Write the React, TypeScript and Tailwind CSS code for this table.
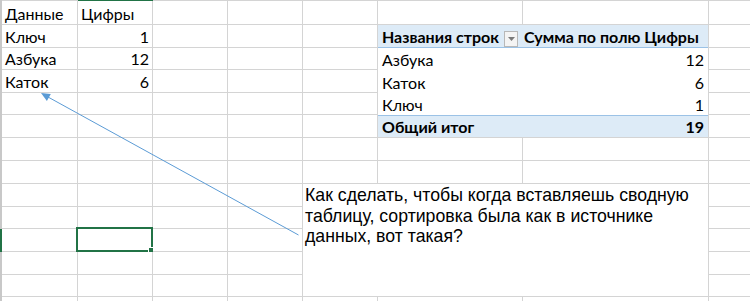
import React from "react";

// Worksheet geometry: narrow header strip, columns A..H, rows 1..14
const COLS = ["A", "B", "C", "D", "E", "F", "G", "H"];
const ROWS = Array.from({ length: 14 }, (_, i) => i + 1);

type CellValue = { text: string; num?: boolean };

const values: Record<string, CellValue> = {
  A1: { text: "Данные" },
  B1: { text: "Цифры" },
  A2: { text: "Ключ" },
  B2: { text: "1", num: true },
  A3: { text: "Азбука" },
  B3: { text: "12", num: true },
  A4: { text: "Каток" },
  B4: { text: "6", num: true },
};

const pivotRows = [
  { label: "Азбука", value: 12, h: "h-[22px]" },
  { label: "Каток", value: 6, h: "h-[23px]" },
  { label: "Ключ", value: 1, h: "h-[22px]" },
];

const cellFont = { fontFamily: "Lato, 'Noto Sans', sans-serif" };

function PivotTable() {
  return (
    <div
      className="col-span-2 row-span-5 flex flex-col border-r border-b border-[#d4d4d4] bg-white text-[16px] leading-[18px] text-black"
      style={cellFont}
    >
      <div className="flex h-[23px] border-b border-[#9bc2e6] bg-[#ddebf7] font-bold">
        <div className="flex w-[145px] items-end justify-between pl-[4px] pr-[5px]">
          <span className="pb-[1px]">Названия строк</span>
          <span className="flex h-[16px] w-[14px] items-center justify-center border border-[#b8b8b8] bg-[#f4f4f4]">
            <svg width="7" height="4" viewBox="0 0 7 4">
              <path d="M0 0 L7 0 L3.5 4 Z" fill="#7a7a7a" />
            </svg>
          </span>
        </div>
        <div className="flex flex-1 items-end pb-[1px] pl-[1px]">Сумма по полю Цифры</div>
      </div>
      {pivotRows.map((r) => (
        <div key={r.label} className={`flex ${r.h} pb-[1px]`}>
          <div className="flex w-[145px] items-end pl-[4px]">{r.label}</div>
          <div className="flex flex-1 items-end justify-end pr-[4px]">{r.value}</div>
        </div>
      ))}
      <div className="flex flex-1 border-t border-[#9bc2e6] bg-[#ddebf7] pb-[1px] font-bold">
        <div className="flex w-[145px] items-end pl-[4px]">Общий итог</div>
        <div className="flex flex-1 items-end justify-end pr-[4px]">19</div>
      </div>
    </div>
  );
}

function NoteBox() {
  return (
    <div
      className="col-span-3 row-span-5 border-r border-b border-[#d4d4d4] bg-white pl-[2px] pt-[1px] text-[17.7px] leading-[20.5px] text-black"
      style={{ fontFamily: "'Liberation Sans', Arial, sans-serif" }}
    >
      Как сделать, чтобы когда вставляешь сводную
      <br />
      таблицу, сортировка была как в источнике
      <br />
      данных, вот такая?
    </div>
  );
}

function Cell({ id }: { id: string }) {
  const v = values[id];
  const selected = id === "B11";
  return (
    <div
      className={`relative flex items-end whitespace-nowrap border-r border-b border-[#d4d4d4] pb-[1px] text-[16px] leading-[18px] text-black ${
        v?.num ? "justify-end pr-[3px]" : "pl-[3px]"
      }`}
      style={cellFont}
    >
      {v?.text}
      {selected && (
        <div className="absolute -left-[2px] -top-[2px] -right-[1px] -bottom-[1px] border-2 border-[#217346]">
          <div className="absolute -right-[3px] -bottom-[3px] h-[6px] w-[6px] border border-white bg-[#217346]" />
        </div>
      )}
    </div>
  );
}

export default function App() {
  const cells: React.ReactNode[] = [];

  // Top header edge: highlighted over the active column
  cells.push(<div key="corner" className="bg-[#c8c8c8]" />);
  COLS.forEach((c) =>
    cells.push(
      <div key={`top-${c}`} className={c === "B" ? "bg-[#217346]" : "bg-[#d4d4d4]"} />
    )
  );

  ROWS.forEach((r) => {
    cells.push(
      <div key={`rh-${r}`} className={r === 11 ? "bg-[#217346]" : "bg-[#c8c8c8]"} />
    );
    COLS.forEach((c) => {
      const id = `${c}${r}`;
      const inPivot = (c === "F" || c === "G") && r >= 2 && r <= 6;
      const inNote = (c === "E" || c === "F" || c === "G") && r >= 9 && r <= 13;
      if (id === "F2") {
        cells.push(<PivotTable key="pivot" />);
        return;
      }
      if (id === "E9") {
        cells.push(<NoteBox key="note" />);
        return;
      }
      if (inPivot || inNote) return;
      cells.push(<Cell key={id} id={id} />);
    });
  });

  return (
    <div className="relative h-[301px] w-[750px] overflow-hidden bg-white">
      <div className="grid grid-cols-[2px_76px_75px_75px_75px_75px_145px_186px_50px] grid-rows-[1px_24px_23px_22px_23px_22px_23px_23px_23px_23px_22px_23px_23px_22px_23px]">
        {cells}
      </div>
      <svg
        className="pointer-events-none absolute left-0 top-0"
        width="750"
        height="301"
        viewBox="0 0 750 301"
      >
        <line x1="298.5" y1="235" x2="48" y2="97" stroke="#5b9bd5" strokeWidth="1" />
        <path d="M41 93 L46.9 100.9 L50.8 93.9 Z" fill="#5b9bd5" />
      </svg>
    </div>
  );
}
